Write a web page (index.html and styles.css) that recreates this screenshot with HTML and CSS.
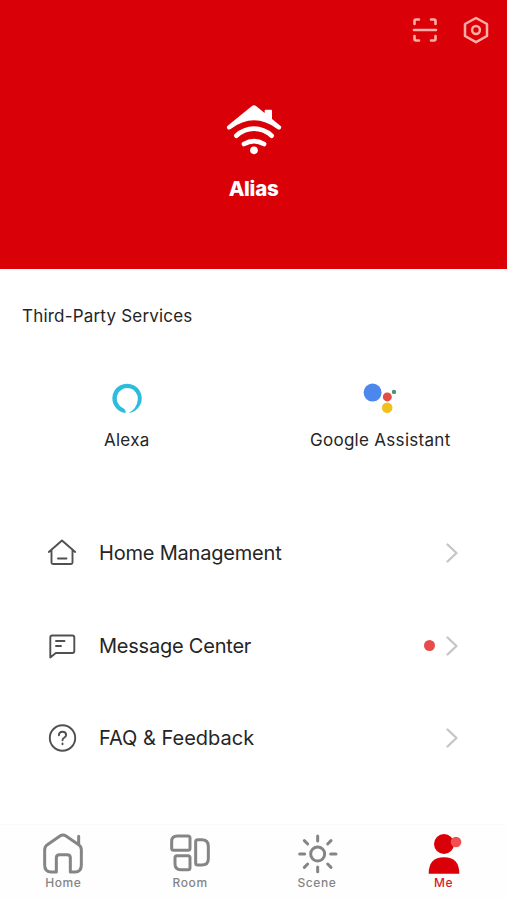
FILE: index.html
```html
<!DOCTYPE html>
<html lang="en">
<head>
<meta charset="utf-8">
<title>Me</title>
<link rel="stylesheet" href="styles.css">
</head>
<body>
<main class="app">
  <header class="hero">
    <div class="actions">
      <svg width="26" height="26" viewBox="0 0 26 26" fill="none" stroke="#ffaca6" stroke-width="2.6" stroke-linecap="round" stroke-linejoin="round"><path d="M2.500 7V4Q2.500 2.500 4 2.500H7M19 2.500h3q1.500 0 1.500 1.500v3M2.500 19v3q0 1.500 1.500 1.500h3M19 23.500h3q1.500 0 1.500-1.500v-3M2 13h22"/></svg>
      <svg width="26" height="28" viewBox="0 0 26 28" fill="none" stroke="#ffaca6" stroke-width="2.5" stroke-linejoin="round"><path d="M13 2L24 8v12L13 26.200 2 20V8z"/><circle cx="13" cy="14" r="3.900"/></svg>
    </div>
    <svg class="logo" width="60" height="52" viewBox="60 38 180 156" fill="none" stroke="#fff" stroke-width="14" stroke-linecap="round"><path d="M71 106Q67 110 70 115Q74 120 80 116Q115 90 150 90Q185 90 220 116Q226 120 230 115Q234 110 229 106L204 86V61Q204 58 201 58H185Q182 58 182 61V68L157 48Q150 42 143 48Z" fill="#fff" stroke="none"/><path d="M97 136Q121 115 150 115Q179 115 203 136M120 161Q150 144 180 161"/><circle cx="150" cy="180" r="11.500" fill="#fff" stroke="none"/></svg>
    <h1 class="name">Alias</h1>
  </header>

  <section class="services">
    <h2 class="heading">Third-Party Services</h2>
    <div class="service-list">
      <div class="service">
        <svg width="32" height="34" viewBox="0 0 32 34"><path d="M14.600 31A14.700 14.700 0 1 1 17.500 31Q26 26.500 26.700 18A10.500 10.500 0 1 0 11.800 26Q15 27.300 14.600 31Z" fill="#2bbddb"/></svg>
        <span>Alexa</span>
      </div>
      <div class="service">
        <svg width="34" height="34" viewBox="0 0 34 34"><circle cx="9.600" cy="10.600" r="9" fill="#4c87ee"/><circle cx="24.300" cy="14.900" r="4.500" fill="#e34d45"/><circle cx="31" cy="9.900" r="2.200" fill="#3f9b6b"/><circle cx="24.200" cy="25.800" r="5.300" fill="#f2bf1d"/></svg>
        <span>Google Assistant</span>
      </div>
    </div>
  </section>

  <nav class="menu">
    <div class="row home">
      <svg class="lead" width="30" height="30" viewBox="0 0 30 30"><path d="M1.800 14L15 2.500 28.200 14M4.500 12v12.500q0 1.500 1.500 1.500h18q1.500 0 1.500-1.500V12M11 20.500h8.500"/></svg>
      <span>Home Management</span>
      <svg class="chevron" width="14" height="22" viewBox="0 0 14 22"><path d="M2.500 2.500L11.500 11l-9 8.500"/></svg>
    </div>
    <div class="row message">
      <svg class="lead" width="30" height="30" viewBox="0 0 30 30"><path d="M3.300 26.500V6.500q0-2 2-2h20q2 0 2 2v13.500q0 2-2 2H8.800zM9 10h8.500M9 15h5"/></svg>
      <span>Message Center</span>
      <i class="dot"></i>
      <svg class="chevron" width="14" height="22" viewBox="0 0 14 22"><path d="M2.500 2.500L11.500 11l-9 8.500"/></svg>
    </div>
    <div class="row faq">
      <svg class="lead" width="30" height="30" viewBox="0 0 30 30"><circle cx="15.500" cy="15" r="12.700"/><path d="M11.900 12.300Q12 8.700 15.500 8.700t3.600 3.300q0 1.600-2 2.800Q15.500 15.800 15.500 17.300M15.500 20.500v.8"/></svg>
      <span>FAQ &amp; Feedback</span>
      <svg class="chevron" width="14" height="22" viewBox="0 0 14 22"><path d="M2.500 2.500L11.500 11l-9 8.500"/></svg>
    </div>
  </nav>

  <footer class="tabs">
    <div class="tab">
      <svg width="44" height="42" viewBox="0 0 132 126"><path d="M44 120H31Q11 120 11 99V53Q11 44 19 38L57 12Q66 6 75 12L113 38Q121 44 121 53V99Q121 120 102 120H88V77Q88 68 79 68H55Q46 68 46 77V120M113 36V13"/></svg>
      <span>Home</span>
    </div>
    <div class="tab">
      <svg width="44" height="42" viewBox="0 0 132 126"><path d="M28 12H60Q66 12 66 18V49Q66 55 60 55H17Q11 55 11 49V29Q11 12 28 12ZM27 71H60Q66 71 66 77V107Q66 113 60 113H38Q21 113 21 96V77Q21 71 27 71ZM89 23H101Q121 23 121 43V80Q121 99 101 99H89Q83 99 83 93V29Q83 23 89 23Z"/></svg>
      <span>Room</span>
    </div>
    <div class="tab">
      <svg width="44" height="42" viewBox="0 0 132 126"><circle cx="68" cy="66" r="21"/><path d="M68 12V27M68 105V119M14 66H29M107 66H123M28 26L38 36M98 96L108 106M28 106L38 96M98 36L108 26"/></svg>
      <span>Scene</span>
    </div>
    <div class="tab active">
      <svg width="44" height="42" viewBox="0 0 132 126"><g stroke="none"><path d="M20 125Q20 76 66 76T112 125Z" fill="#da0008"/><circle cx="66" cy="36" r="30" fill="#da0008"/><circle cx="102" cy="30" r="16" fill="#f05053"/></g></svg>
      <span>Me</span>
    </div>
  </footer>
</main>
</body>
</html>
```
FILE: styles.css
```css
* { box-sizing: border-box; }
body {
  margin: 0;
  background: #fff;
  color: #252525;
  font-family: Inter, "Liberation Sans", sans-serif;
}
.app { display: flex; flex-direction: column; height: 900px; overflow: hidden; }
svg { display: block; flex: none; }
h1, h2 { margin: 0; }

.hero {
  height: 269px;
  background: #da0008;
  display: flex;
  flex-direction: column;
  align-items: center;
}
.actions {
  align-self: stretch;
  display: flex;
  justify-content: flex-end;
  align-items: center;
  gap: 25px;
  height: 60px;
  padding-right: 18px;
}
.logo { margin-top: 43px; }
.name {
  margin-top: 20px;
  color: #fff;
  font-size: 20.5px;
  line-height: 28px;
  font-weight: 800;
  letter-spacing: -.3px;
}

.services { height: 237.5px; padding-top: 35px; }
.heading {
  padding-left: 22px;
  font-size: 17px;
  line-height: 24px;
  font-weight: 400;
  letter-spacing: .2px;
}
.service-list { display: grid; grid-template-columns: 1fr 1fr; margin-top: 54px; }
.service {
  display: flex;
  flex-direction: column;
  align-items: center;
  font-size: 17px;
  line-height: 24px;
  gap: 12px;
  letter-spacing: .3px;
}

.menu { height: 317.5px; }
.row {
  height: 92.7px;
  display: flex;
  align-items: center;
  padding: 0 48px 0 47px;
  font-size: 20px;
  line-height: 28px;
}
.row span { margin-left: 22px; margin-right: auto; }
.home { letter-spacing: -.2px; }
.message { letter-spacing: -.22px; }
.lead {
  fill: none;
  stroke: #505050;
  stroke-width: 1.9;
  stroke-linejoin: round;
  stroke-linecap: round;
}
.chevron { fill: none; stroke: #c5c5c5; stroke-width: 2.3; stroke-linecap: round; stroke-linejoin: round; }
.dot { width: 11px; height: 11px; margin-right: 10px; border-radius: 50%; background: #e94a4c; }

.tabs {
  flex: 1;
  display: grid;
  grid-template-columns: repeat(4, 1fr);
  background: #fefefe;
  border-top: 1px solid #fafafa;
  padding-top: 7px;
}
.tab {
  display: flex;
  flex-direction: column;
  align-items: center;
  color: #858585;
  font-size: 12px;
  line-height: 16px;
  font-weight: 500;
  letter-spacing: .6px;
}
.tab svg { fill: none; stroke: #858585; stroke-width: 9; stroke-linecap: round; stroke-linejoin: round; }
.tab span { margin-top: 1px; }
.active { color: #d51b24; }
```
